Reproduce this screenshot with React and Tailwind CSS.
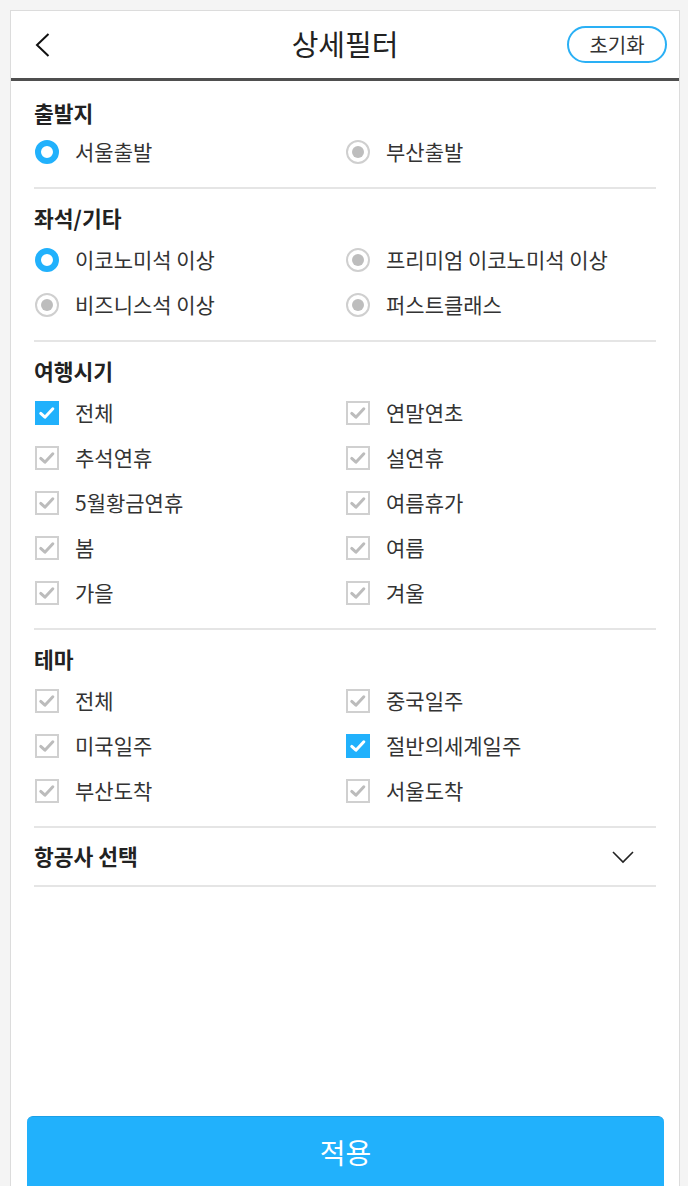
const sections = [
  {
    title: "출발지",
    type: "radio",
    items: [
      { label: "서울출발", on: true },
      { label: "부산출발" },
    ],
  },
  {
    title: "좌석/기타",
    type: "radio",
    items: [
      { label: "이코노미석 이상", on: true },
      { label: "프리미엄 이코노미석 이상" },
      { label: "비즈니스석 이상" },
      { label: "퍼스트클래스" },
    ],
  },
  {
    title: "여행시기",
    type: "check",
    items: [
      { label: "전체", on: true },
      { label: "연말연초" },
      { label: "추석연휴" },
      { label: "설연휴" },
      { label: "5월황금연휴" },
      { label: "여름휴가" },
      { label: "봄" },
      { label: "여름" },
      { label: "가을" },
      { label: "겨울" },
    ],
  },
  {
    title: "테마",
    type: "check",
    items: [
      { label: "전체" },
      { label: "중국일주" },
      { label: "미국일주" },
      { label: "절반의세계일주", on: true },
      { label: "부산도착" },
      { label: "서울도착" },
    ],
  },
];

function Radio({ on }) {
  if (on) {
    return <span className="w-6 h-6 rounded-full border-[6px] border-[#21b1fc] bg-white shrink-0" />;
  }
  return (
    <span className="w-6 h-6 rounded-full border-2 border-[#cfcfcf] bg-white shrink-0 flex items-center justify-center">
      <span className="w-3 h-3 rounded-full bg-[#bdbdbd]" />
    </span>
  );
}

function Check({ on }) {
  return (
    <span
      className={
        on
          ? "w-6 h-6 bg-[#21b1fc] shrink-0 flex items-center justify-center"
          : "w-6 h-6 border-2 border-[#d0d0d0] bg-white shrink-0 flex items-center justify-center"
      }
    >
      <svg viewBox="0 0 24 24" className="w-5 h-5">
        <path
          d="M4.5 12.5 L9.5 17 L19 7"
          fill="none"
          stroke={on ? "#ffffff" : "#bcbcbc"}
          strokeWidth="3.6"
          strokeLinecap="round"
          strokeLinejoin="round"
        />
      </svg>
    </span>
  );
}

export default function App() {
  return (
    <div
      className="h-[1186px] bg-[#f4f4f4] pt-[10px] pl-[10px] overflow-hidden"
      style={{ fontFamily: '"Noto Sans CJK KR", "Noto Sans", sans-serif' }}
    >
      <div className="w-[670px] h-[1176px] bg-white border-x border-t border-[#dcdcdc] flex flex-col">
        {/* 헤더 */}
        <div className="h-[67px] grid grid-cols-[1fr_auto_1fr] items-center border-b-[3px] border-[#4f4f4f] box-content">
          <div className="pl-[24px] flex items-center">
            <svg width="16" height="24" viewBox="0 0 16 24">
              <polyline points="13.5,1 2,12 13.5,23" fill="none" stroke="#111" strokeWidth="2" />
            </svg>
          </div>
          <h1 className="text-[29px] text-[#222] leading-none -mt-[3px]">상세필터</h1>
          <div className="flex justify-end pr-[12px]">
            <button className="w-[100px] h-[37px] rounded-full border-2 border-[#2ab0f5] text-[20px] text-[#333] leading-none">
              초기화
            </button>
          </div>
        </div>

        {/* 필터 */}
        <div className="px-[23px]">
          {sections.map((s, i) => (
            <div
              key={s.title}
              className={
                (i === 0 ? "pt-[18px] " : "pt-[15px] ") + "pb-[13px] border-b-2 border-[#e5e5e5]"
              }
            >
              <h2 className="h-7 flex items-center text-[21.5px] font-bold text-[#222]">{s.title}</h2>
              <div className={(i === 0 ? "mt-[2px]" : "mt-[5px]") + " grid grid-cols-2"}>
                {s.items.map((it) => (
                  <div key={it.label} className="h-[45px] flex items-center gap-4 pl-px">
                    {s.type === "radio" ? <Radio on={it.on} /> : <Check on={it.on} />}
                    <span className="text-[21px] text-[#333]">{it.label}</span>
                  </div>
                ))}
              </div>
            </div>
          ))}
          <div className="h-[59px] flex items-center justify-between border-b-2 border-[#e5e5e5]">
            <span className="text-[21.5px] font-bold text-[#222]">항공사 선택</span>
            <svg width="22" height="14" viewBox="0 0 22 14" className="mr-[22px]">
              <polyline points="1,2 11,12 21,2" fill="none" stroke="#222" strokeWidth="1.6" />
            </svg>
          </div>
        </div>

        <div className="flex-1" />

        <div className="px-4 pr-[15px]">
          <button className="w-full h-[70px] rounded-t-md bg-[#21b1fc] border-t border-[#1c9fe6] text-white text-[28px]">
            적용
          </button>
        </div>
      </div>
    </div>
  );
}
